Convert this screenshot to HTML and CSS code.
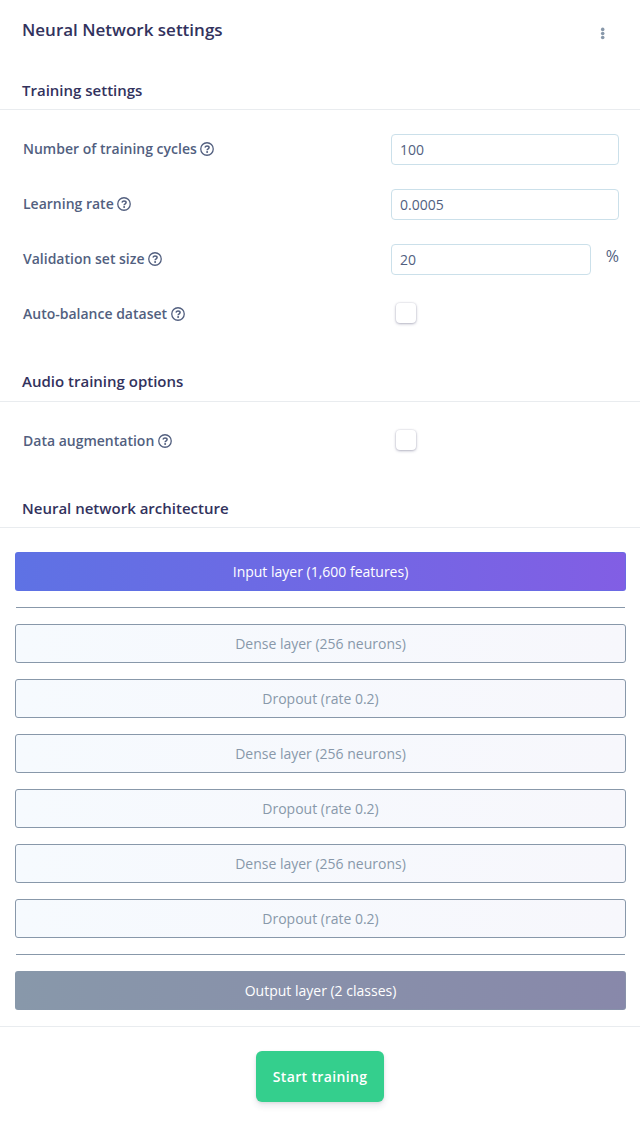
FILE: index.html
```html
<!DOCTYPE html>
<html lang="en">
<head>
<meta charset="utf-8">
<title>Neural Network settings</title>
<link rel="stylesheet" href="styles.css">
</head>
<body>
<svg class="sprite" aria-hidden="true">
  <symbol id="help" viewBox="0 0 14 14">
    <circle cx="7" cy="7" r="6.250" fill="none" stroke="currentColor" stroke-width="1.3"/>
    <path d="M4.900 5.500C5.300 4.500 6 4 7 4c1.300 0 2.100.7 2.100 1.600C9.100 6.900 7.100 6.800 7.100 8.300" fill="none" stroke="currentColor" stroke-width="1.500"/>
    <circle cx="7.100" cy="10.100" r="1" fill="currentColor"/>
  </symbol>
</svg>
<main class="card">
  <header class="card-header">
    <h1 class="title">Neural Network settings</h1>
    <button class="menu" aria-label="More options">
      <svg width="6" height="13" viewBox="0 0 6 13" fill="currentColor"><circle cx="2.700" cy="2.400" r="1.800"/><circle cx="2.700" cy="6.450" r="1.800"/><circle cx="2.700" cy="10.500" r="1.800"/></svg>
    </button>
  </header>

  <h2 class="section-title">Training settings</h2>
  <section class="form form-training">
    <div class="row">
      <label class="label" for="cycles">Number of training cycles <svg class="help"><use href="#help"/></svg></label>
      <div class="field"><input class="input" id="cycles" type="text" value="100"></div>
    </div>
    <div class="row">
      <label class="label" for="rate">Learning rate <svg class="help"><use href="#help"/></svg></label>
      <div class="field"><input class="input" id="rate" type="text" value="0.0005"></div>
    </div>
    <div class="row">
      <label class="label" for="validation">Validation set size <svg class="help"><use href="#help"/></svg></label>
      <div class="field"><input class="input" id="validation" type="text" value="20"><span class="unit">%</span></div>
    </div>
    <div class="row">
      <label class="label" for="balance">Auto-balance dataset <svg class="help"><use href="#help"/></svg></label>
      <div class="field"><input class="checkbox" id="balance" type="checkbox"></div>
    </div>
  </section>

  <h2 class="section-title section-title-audio">Audio training options</h2>
  <section class="form form-audio">
    <div class="row">
      <label class="label" for="augment">Data augmentation <svg class="help"><use href="#help"/></svg></label>
      <div class="field"><input class="checkbox" id="augment" type="checkbox"></div>
    </div>
  </section>

  <h2 class="section-title">Neural network architecture</h2>
  <section class="layers">
    <div class="layer layer-input">Input layer (1,600 features)</div>
    <hr class="divider">
    <div class="layer">Dense layer (256 neurons)</div>
    <div class="layer">Dropout (rate 0.2)</div>
    <div class="layer">Dense layer (256 neurons)</div>
    <div class="layer">Dropout (rate 0.2)</div>
    <div class="layer">Dense layer (256 neurons)</div>
    <div class="layer">Dropout (rate 0.2)</div>
    <hr class="divider">
    <div class="layer layer-output">Output layer (2 classes)</div>
  </section>

  <footer class="footer"><button class="start">Start training</button></footer>
</main>
</body>
</html>
```
FILE: styles.css
```css
* { box-sizing: border-box; }
body {
  margin: 0;
  background: #fff;
  color: #525f7f;
  font: 400 14px/21px "Open Sans", sans-serif;
}
.sprite { display: none; }
.card { height: 1123px; overflow: hidden; }
.card-header {
  display: flex;
  justify-content: space-between;
  height: 69px;
  padding: 18px 34px 0 22px;
}
.title {
  margin: 0;
  color: #32325d;
  font-size: 17px;
  font-weight: 600;
  line-height: 24px;
}
.menu {
  display: flex;
  height: 13px;
  margin: 9px 0 0;
  padding: 0;
  border: 0;
  background: none;
  color: #8898aa;
}
.section-title {
  height: 41px;
  margin: 0;
  padding: 10px 22px 0;
  border-bottom: 1px solid #e9ecef;
  color: #32325d;
  font-size: 15px;
  font-weight: 600;
  line-height: 23px;
}
.section-title-audio { padding-top: 9px; }
.form { padding: 24px 21px 0 23px; }
.form-training { height: 251px; }
.form-audio { height: 85px; }
.row {
  display: flex;
  justify-content: space-between;
  height: 55px;
}
.label {
  display: flex;
  align-items: center;
  gap: 3.7px;
  height: 29px;
  font-weight: 600;
}
.help { width: 14px; height: 14px; }
.field { display: flex; width: 228px; }
.input {
  flex: 1;
  min-width: 0;
  height: 31px;
  padding: 0 8px 1px;
  border: 1px solid #cbe0ea;
  border-radius: 4px;
  background: #fff;
  color: #525f7f;
  font: inherit;
}
.unit {
  width: 28px;
  text-align: right;
  font-size: 16px;
  line-height: 24px;
}
.checkbox {
  appearance: none;
  width: 20px;
  height: 20px;
  margin: 4px 0 0 5px;
  border-radius: 4px;
  background: #fff;
  box-shadow: 0 0 1px 1px rgba(50, 50, 93, .06), 0 1px 3px rgba(50, 50, 93, .34);
}
.layers {
  display: flex;
  flex-direction: column;
  gap: 16px;
  height: 499px;
  padding: 24px 14px 0 15px;
  border-bottom: 1px solid #e9ecef;
}
.layer {
  height: 39px;
  border: 1px solid #8898aa;
  border-radius: 3px;
  background: linear-gradient(87deg, #f6fafe, #f7f7fc);
  color: #8898aa;
  line-height: 37px;
  text-align: center;
}
.layer-input {
  border-color: rgba(94, 114, 228, .6);
  background: linear-gradient(87deg, #5e72e4, #825ee4) border-box;
  color: #fff;
}
.layer-output {
  border-color: rgba(136, 152, 170, .6);
  background: linear-gradient(87deg, #8898aa, #8888aa) border-box;
  color: #fff;
}
.divider {
  width: auto;
  height: 1px;
  margin: 0 1px;
  border: 0;
  background: #8898aa;
}
.footer {
  display: flex;
  justify-content: center;
  padding-top: 24px;
}
.start {
  width: 128px;
  height: 51px;
  padding: 0;
  border: 0;
  border-radius: 6px;
  background: #34cf8d;
  box-shadow: 0 4px 6px rgba(50, 50, 93, .11), 0 1px 3px rgba(0, 0, 0, .08);
  color: #fff;
  font: 600 14px/21px "Open Sans", sans-serif;
  letter-spacing: .35px;
}
```
